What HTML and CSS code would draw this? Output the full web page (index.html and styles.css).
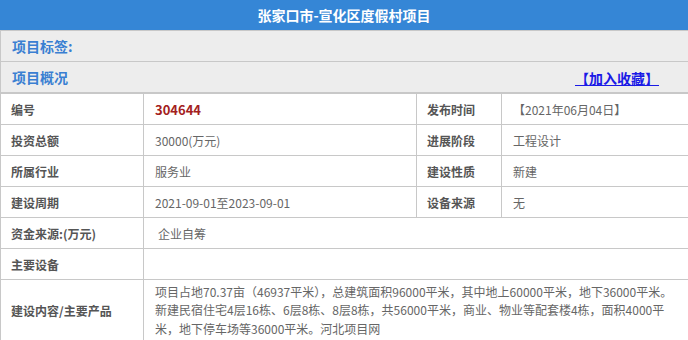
FILE: index.html
```html
<!DOCTYPE html>
<html lang="zh-CN">
<head>
<meta charset="utf-8">
<title>张家口市-宣化区度假村项目</title>
<link rel="stylesheet" href="styles.css">
</head>
<body>
<div class="page">
  <div class="title">张家口市-宣化区度假村项目</div>
  <div class="bar"><span class="bar-label">项目标签:</span></div>
  <div class="bar"><span class="bar-label">项目概况</span><a class="fav" href="#">【加入收藏】</a></div>
  <table class="info">
    <colgroup>
      <col class="c1"><col class="c2"><col class="c3"><col class="c4">
    </colgroup>
    <tr>
      <th>编号</th><td class="code">304644</td>
      <th>发布时间</th><td>【2021年06月04日】</td>
    </tr>
    <tr>
      <th>投资总额</th><td>30000(万元)</td>
      <th>进展阶段</th><td>工程设计</td>
    </tr>
    <tr>
      <th>所属行业</th><td>服务业</td>
      <th>建设性质</th><td>新建</td>
    </tr>
    <tr>
      <th>建设周期</th><td>2021-09-01至2023-09-01</td>
      <th>设备来源</th><td>无</td>
    </tr>
    <tr>
      <th>资金来源:(万元)</th><td colspan="3" class="wide">企业自筹</td>
    </tr>
    <tr>
      <th>主要设备</th><td colspan="3"></td>
    </tr>
    <tr class="desc">
      <th>建设内容/主要产品</th>
      <td colspan="3" class="long">项目占地70.37亩（46937平米），总建筑面积96000平米，其中地上60000平米，地下36000平米。新建民宿住宅4层16栋、6层8栋、8层8栋，共56000平米，商业、物业等配套楼4栋，面积4000平米，地下停车场等36000平米。河北项目网</td>
    </tr>
  </table>
</div>
</body>
</html>
```

FILE: styles.css
```css
html, body {
  margin: 0;
  padding: 0;
  background: #ffffff;
  overflow: hidden;
}

.page {
  width: 688px;
  font-family: "Noto Sans CJK SC", "Noto Sans", sans-serif;
}

.title {
  height: 30px;
  line-height: 30px;
  background: #3586d6;
  color: #ffffff;
  font-size: 14px;
  font-weight: bold;
  text-align: center;
  border-bottom: 1px solid #c8c8c8;
}

.bar {
  height: 30px;
  background: #ededed;
  border-bottom: 1px solid #c8c8c8;
  border-left: 1px solid #c8c8c8;
  display: flex;
  align-items: center;
  justify-content: space-between;
  padding: 0 29px 0 11px;
}

.bar-label {
  color: #3a7fd2;
  font-size: 14px;
  font-weight: bold;
}

.fav {
  color: #1a1ae6;
  font-size: 14px;
  font-weight: bold;
  text-decoration: underline;
  margin-top: 2px;
}

.info {
  width: 688px;
  border-collapse: collapse;
  table-layout: fixed;
}

.c1 { width: 143px; }
.c2 { width: 273px; }
.c3 { width: 85px; }
.c4 { width: 187px; }

.info th,
.info td {
  height: 30px;
  border: 1px solid #c8c8c8;
  font-size: 12px;
  padding: 0 0 0 11px;
  vertical-align: middle;
  text-align: left;
}

.info tr > :last-child {
  border-right: 0;
}

.info th {
  color: #555555;
  font-weight: bold;
  padding-left: 10px;
}

.info td {
  color: #666666;
}

.info td.code {
  color: #a32020;
  font-weight: bold;
  font-size: 13px;
}

.info td.wide {
  padding-left: 14px;
}

.info .desc th,
.info .desc td {
  height: 59px;
}

.info td.long {
  line-height: 18.5px;
  padding: 1px 15px 0 11px;
}
```
